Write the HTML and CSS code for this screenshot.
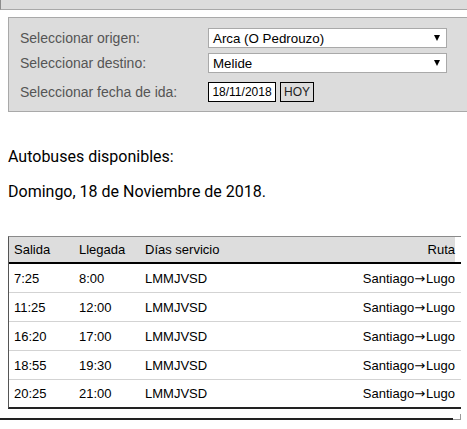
FILE: index.html
```html
<!DOCTYPE html>
<html lang="es">
<head>
<meta charset="utf-8">
<title>Autobuses</title>
<link rel="stylesheet" href="styles.css">
</head>
<body>
<div class="topbar"></div>
<div class="form">
  <div class="label">Seleccionar origen:</div>
  <div class="select"><span>Arca (O Pedrouzo)</span><span class="arrow"></span></div>
  <div class="label">Seleccionar destino:</div>
  <div class="select"><span>Melide</span><span class="arrow"></span></div>
  <div class="label">Seleccionar fecha de ida:</div>
  <div class="date-row"><span class="date">18/11/2018</span><span class="btn">HOY</span></div>
</div>
<div class="content">
  <p class="text">Autobuses disponibles:</p>
  <p class="text">Domingo, 18 de Noviembre de 2018.</p>
</div>
<div class="table-wrap">
  <table class="buses">
    <thead>
      <tr><th class="c1">Salida</th><th class="c2">Llegada</th><th class="c3">Días servicio</th><th class="c4">Ruta</th></tr>
    </thead>
    <tbody>
      <tr><td>7:25</td><td>8:00</td><td>LMMJVSD</td><td class="c4">Santiago<span class="arr">→</span>Lugo</td></tr>
      <tr><td>11:25</td><td>12:00</td><td>LMMJVSD</td><td class="c4">Santiago<span class="arr">→</span>Lugo</td></tr>
      <tr><td>16:20</td><td>17:00</td><td>LMMJVSD</td><td class="c4">Santiago<span class="arr">→</span>Lugo</td></tr>
      <tr><td>18:55</td><td>19:30</td><td>LMMJVSD</td><td class="c4">Santiago<span class="arr">→</span>Lugo</td></tr>
      <tr class="last"><td>20:25</td><td>21:00</td><td>LMMJVSD</td><td class="c4">Santiago<span class="arr">→</span>Lugo</td></tr>
    </tbody>
  </table>
</div>
<div class="rule"><div class="rule-line"></div><div class="rule-end"></div></div>
</body>
</html>
```

FILE: styles.css
```css
html, body {
  margin: 0;
  padding: 0;
  background: #fff;
  overflow: hidden;
}
body {
  font-family: Roboto, "Liberation Sans", sans-serif;
  color: #000;
}
.topbar {
  height: 9px;
  background: #dcdcdc;
  border-bottom: 1px solid #a8a8a8;
  border-left: 1px solid #8c8c8c;
  margin-right: -10px;
}
.form {
  margin: 7px -20px 0 8px;
  border: 1px solid #a9a9a9;
  background: #dcdcdc;
  padding: 10px 0 9px 11px;
  display: grid;
  grid-template-columns: 188px 239px;
  grid-template-rows: 20px 20px 24px;
  row-gap: 5px;
  align-items: end;
  font-family: "Liberation Sans", Arial, sans-serif;
  font-size: 14px;
  color: #555;
}
.label {
  line-height: 20px;
}
.select {
  box-sizing: border-box;
  height: 20px;
  border: 1px solid #a9a9a9;
  background: #fff;
  display: flex;
  align-items: center;
  justify-content: space-between;
  padding: 0 6px 0 4px;
  font-size: 13.33px;
  color: #000;
}
.arrow {
  width: 0;
  height: 0;
  border-left: 3px solid transparent;
  border-right: 3px solid transparent;
  border-top: 6px solid #000;
}
.date-row {
  display: flex;
  gap: 4px;
  height: 20px;
}
.date, .btn {
  box-sizing: border-box;
  height: 20px;
  border: 1px solid #000;
  display: flex;
  align-items: center;
  font-size: 12px;
}
.date {
  width: 68px;
  background: #fff;
  color: #000;
  justify-content: center;
}
.btn {
  width: 34px;
  background: #dcdcdc;
  color: #222;
  justify-content: center;
}
.content {
  padding-top: 19px;
  padding-left: 8px;
}
.text {
  margin: 16px 0;
  font-size: 16px;
  line-height: 19px;
}
.table-wrap {
  margin: 35px 0 0 8px;
  width: 453px;
  box-sizing: border-box;
  border-top: 1px solid #8a8a8a;
  border-left: 1px solid #555;
  border-bottom: 2px solid #222;
}
.buses {
  width: 100%;
  border-collapse: separate;
  border-spacing: 0;
  font-family: "Liberation Sans", Arial, sans-serif;
  font-size: 13px;
  color: #000;
}
.buses th {
  height: 25px;
  padding: 0 0 0 5px;
  background: #dddddd;
  font-weight: normal;
  text-align: left;
  border-bottom: 2px solid #000;
}
.buses td {
  height: 28px;
  padding: 0 0 0 5px;
  border-bottom: 1px solid #d3d3d3;
}
.buses tr.last td {
  height: 27px;
  border-bottom: none;
}
.buses .c1 { width: 60px; }
.buses .c2 { width: 61px; }
.buses .c4 {
  text-align: right;
  padding-right: 6px;
}
.arr {
  font-family: "DejaVu Sans", sans-serif;
  font-size: 13px;
  letter-spacing: 1px;
}
.buses th.c4 {
  background: linear-gradient(to right, #dddddd calc(100% - 6px), #fff 0);
}
.rule {
  display: flex;
  align-items: flex-end;
  margin-top: 3px;
  height: 8px;
}
.rule-line {
  width: 453px;
  height: 2px;
  background: #222;
}
.rule-end {
  width: 8px;
  height: 6px;
  box-sizing: border-box;
  border-right: 1px solid #999;
  border-bottom: 1px solid #999;
}
```
